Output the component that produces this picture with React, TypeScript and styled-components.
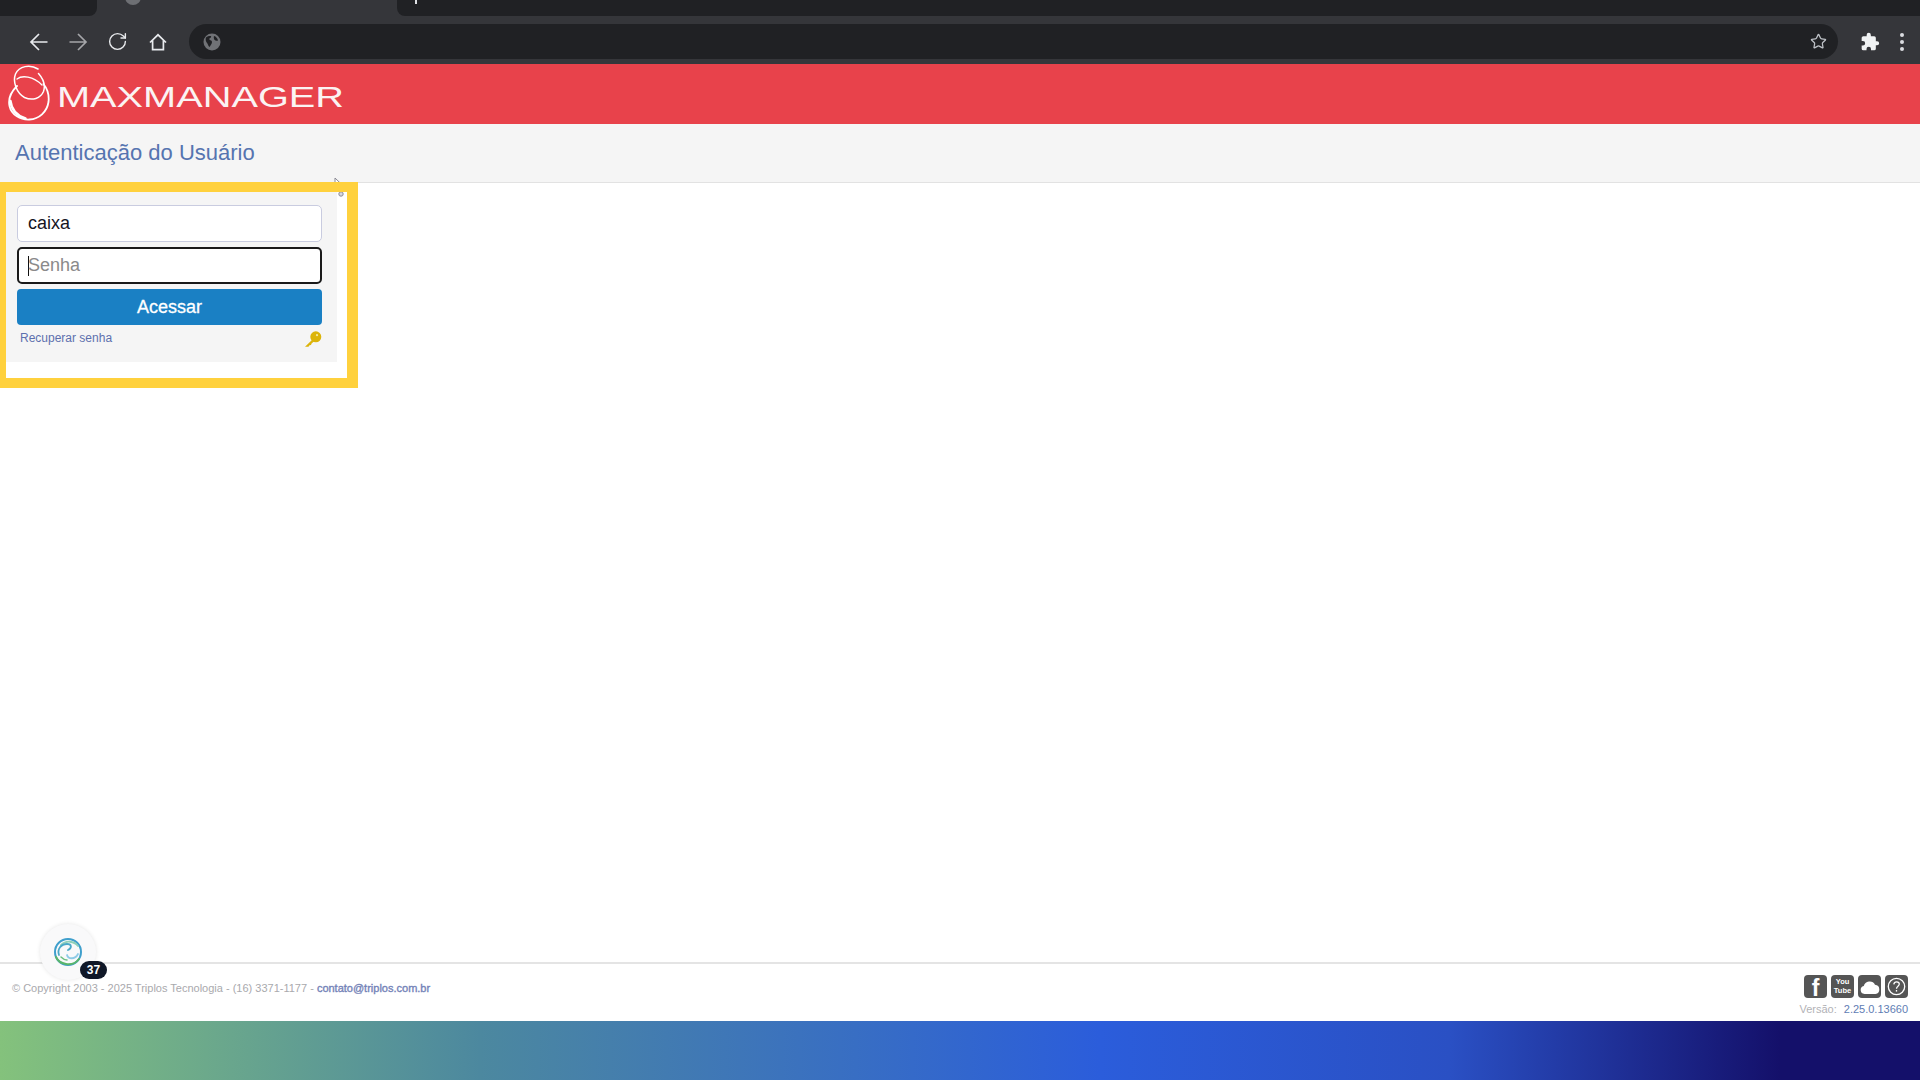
import React from "react";
import styled, { createGlobalStyle } from "styled-components";
import { RotateCw, Star } from "lucide-react";

const Global = createGlobalStyle`
  html, body { margin: 0; padding: 0; background: #fff; }
  body { font-family: "Liberation Sans", Arial, sans-serif; }
  * { box-sizing: border-box; }
`;

const Page = styled.div`
  position: relative;
  width: 1920px;
  height: 1080px;
  display: flex;
  flex-direction: column;
  overflow: hidden;
  background: #fff;
`;

const TabStrip = styled.div`
  height: 16px;
  display: flex;
  background: #35363a;
  flex: none;
`;

const DarkTab = styled.div<{ $side: "left" | "right" }>`
  height: 16px;
  background: #202124;
  width: ${(p) => (p.$side === "left" ? "97px" : "auto")};
  flex: ${(p) => (p.$side === "left" ? "none" : "1")};
  border-radius: ${(p) => (p.$side === "left" ? "0 0 8px 0" : "0 0 0 8px")};
  padding-left: 17px;
  overflow: hidden;
`;

const ActiveTab = styled.div`
  width: 300px;
  height: 16px;
  padding-left: 28px;
  overflow: hidden;
  flex: none;
`;

const TabFavicon = styled.div`
  width: 16px;
  height: 16px;
  margin-top: -11px;
  border-radius: 50%;
  background: #6d6f73;
`;

const Plus = styled.div`
  width: 2px;
  height: 4px;
  margin-left: 1px;
  background: #dfe1e5;
`;

const Toolbar = styled.div`
  height: 48px;
  padding: 7px 0 4px 29px;
  display: flex;
  align-items: center;
  background: #35363a;
  flex: none;
`;

const NavButton = styled.div<{ $dim?: boolean; $w?: number }>`
  width: ${(p) => p.$w ?? 39}px;
  display: flex;
  color: ${(p) => (p.$dim ? "#a5a6a9" : "#e8eaed")};
  flex: none;
`;

const Omnibox = styled.div`
  width: 1649px;
  height: 35px;
  margin-left: 10px;
  padding: 0 11px 0 14px;
  display: flex;
  align-items: center;
  justify-content: space-between;
  border-radius: 18px;
  background: #202124;
  color: #bdc1c6;
  flex: none;
`;

const ToolbarEnd = styled.div`
  display: flex;
  align-items: center;
  gap: 20px;
  margin-left: 22px;
  color: #f1f3f4;
`;

const Dots = styled.div`
  display: flex;
  flex-direction: column;
  gap: 3px;
`;

const Dot = styled.span`
  width: 4px;
  height: 4px;
  border-radius: 50%;
  background: #dadce0;
`;

const BrandBar = styled.header`
  height: 60px;
  padding: 0 0 3px 8px;
  display: flex;
  align-items: center;
  background: #e8424b;
  flex: none;
`;

const BrandName = styled.span`
  display: inline-block;
  margin: 8px 0 0 5px;
  font-family: "Liberation Sans", sans-serif;
  font-size: 29px;
  line-height: 30px;
  color: #fbf3f3;
  transform: scaleX(1.37);
  transform-origin: left center;
`;

const TitleBar = styled.div`
  height: 59px;
  padding: 0 0 0 15px;
  display: flex;
  align-items: center;
  background: #f5f5f5;
  border-bottom: 1px solid #e2e2e2;
  flex: none;
`;

const Title = styled.h1`
  margin: 0;
  font-size: 22px;
  font-weight: 400;
  color: #5674b0;
`;

const Main = styled.main`
  flex: 1;
  min-height: 0;
`;

const Highlight = styled.div`
  width: 358px;
  height: 206px;
  margin-top: -1px;
  border-style: solid;
  border-color: #ffd13d;
  border-width: 10px 11px 10px 6px;
  background: #fff;
`;

const LoginPanel = styled.form`
  width: 331px;
  height: 170px;
  padding: 13px 0 0 11px;
  display: flex;
  flex-direction: column;
  background: #f5f5f5;
`;

const Input = styled.div<{ $focus?: boolean }>`
  width: 305px;
  height: 37px;
  margin-bottom: 5px;
  padding-left: ${(p) => (p.$focus ? "9px" : "10px")};
  display: flex;
  align-items: center;
  font-size: 18px;
  color: #15151f;
  background: #fff;
  border-radius: 5px;
  border: ${(p) => (p.$focus ? "2px solid #1a1a1a" : "1px solid #c9cce0")};
`;

const Caret = styled.span`
  width: 1px;
  height: 20px;
  margin-right: -1px;
  background: #111;
`;

const Placeholder = styled.span`
  color: #8a8a8a;
`;

const Submit = styled.button`
  width: 305px;
  height: 36px;
  padding: 0;
  border: none;
  border-radius: 4px;
  font: 400 18px "Liberation Sans", sans-serif;
  -webkit-text-stroke: 0.3px #fff;
  color: #fff;
  background: #1a80c4;
`;

const LinkRow = styled.div`
  width: 305px;
  margin-top: 6px;
  padding-left: 3px;
  display: flex;
  align-items: center;
  justify-content: space-between;
`;

const RecoverLink = styled.a`
  margin-top: -3px;
  font-size: 12px;
  color: #5d70ae;
`;

const Footer = styled.footer`
  height: 59px;
  padding: 0 12px 0 12px;
  display: flex;
  align-items: flex-start;
  justify-content: space-between;
  background: #fff;
  border-top: 2px solid #e4e4e4;
  flex: none;
`;

const Copyright = styled.div`
  margin-top: 18px;
  font-size: 11px;
  color: #a9a9ad;
`;

const Contact = styled.a`
  color: #7483b8;
  -webkit-text-stroke: 0.35px #7483b8;
`;

const FooterRight = styled.div`
  display: flex;
  flex-direction: column;
  align-items: flex-end;
  gap: 5px;
  padding-top: 11px;
`;

const SocialRow = styled.div`
  display: flex;
  gap: 4px;
`;

const SocialIcon = styled.div`
  width: 23px;
  height: 23px;
  display: flex;
  align-items: center;
  justify-content: center;
  border-radius: 4px;
  background: #555;
  color: #fff;
`;

const FacebookGlyph = styled.span`
  margin-top: 3px;
  font: 700 23px/23px "Liberation Sans", sans-serif;
`;

const YouTubeGlyph = styled.span`
  font: 700 7.5px/8.5px "Liberation Sans", sans-serif;
  text-align: center;
`;

const Version = styled.div`
  font-size: 11px;
  color: #b2b2b6;
`;

const VersionNumber = styled.span`
  margin-left: 4px;
  color: #5f7db4;
`;

const GradientBand = styled.div`
  height: 59px;
  background: linear-gradient(90deg, #84c27c 0, #4c889f 480px, #2b5ddb 1100px, #2a50c4 1450px, #14106a 1780px, #14106a 1920px);
  flex: none;
`;

const ChatBubble = styled.div`
  position: absolute;
  left: 40px;
  top: 924px;
  width: 56px;
  height: 56px;
  display: flex;
  align-items: center;
  justify-content: center;
  border-radius: 50%;
  background: #f9f9fa;
  box-shadow: 0 0 4px rgba(0, 0, 0, 0.1);
`;

const ChatBadge = styled.div`
  position: absolute;
  left: 80px;
  top: 961px;
  width: 27px;
  height: 18px;
  border-radius: 9px;
  text-align: center;
  font: 700 12px/18px "Liberation Sans", sans-serif;
  color: #fff;
  background: #101828;
`;

const CursorPiece = styled.svg<{ $top: number }>`
  position: absolute;
  left: 334px;
  top: ${(p) => p.$top}px;
`;

const BackIcon = () => (
  <svg width="20" height="20" viewBox="0 0 20 20" fill="none" stroke="currentColor" strokeWidth="1.7">
    <path d="M18.500 10H2M10 2l-8 8 8 8" />
  </svg>
);

const ForwardIcon = () => (
  <svg width="20" height="20" viewBox="0 0 20 20" fill="none" stroke="currentColor" strokeWidth="1.7">
    <path d="M1.500 10H18M10 2l8 8-8 8" />
  </svg>
);

const HomeIcon = () => (
  <svg width="20" height="20" viewBox="0 0 20 20" fill="none" stroke="currentColor" strokeWidth="1.7">
    <path d="M2 10.500 10 2.800l8 7.700M4.600 8.500V17.600h10.800V8.500" />
  </svg>
);

const GlobeIcon = () => (
  <svg width="18" height="18" viewBox="0 0 18 18">
    <circle cx="9" cy="9" r="8.500" fill="#707276" />
    <path d="M3 4.500c2-1.500 3.500-1.800 5-1.500 .6 1-.4 2-1.600 2.400-.5 1 .6 1.600 1.800 2.100 1.200.7.9 2.500.1 3.800-.8 1.100-1.400 2.800-2 2.600C4.800 12.500 5 11 4 10 2.800 8.500 2.300 6.500 3 4.500Z M11 3c2 .4 3.700 2.500 4 4.500-1.400.5-2.800.2-3.600-.8C10.800 5.600 10.600 4 11 3Z" fill="#202124" />
  </svg>
);

const PuzzleIcon = () => (
  <svg width="20" height="20" viewBox="0 0 24 24" fill="currentColor">
    <path d="M20.500 11H19V7a2 2 0 0 0-2-2h-4V3.500a2.500 2.500 0 0 0-5 0V5H4a2 2 0 0 0-2 2v3.800h1.500a2.700 2.700 0 0 1 0 5.400H2V20a2 2 0 0 0 2 2h3.800v-1.500a2.700 2.700 0 0 1 5.400 0V22H17a2 2 0 0 0 2-2v-4h1.500a2.500 2.500 0 0 0 0-5Z" />
  </svg>
);

const LogoRings = () => (
  <svg width="44" height="56" viewBox="0 0 44 56" fill="none" stroke="#fff" strokeLinecap="round">
    <path d="M9 21C3 27 0 34 1.500 41c2 9 11 14 20 13.500C31 54 39 47 40.500 37c.8-7-1-13-5-18" strokeWidth="1.800" />
    <path d="M2.500 36c1 9 7 15 15 17.500" strokeWidth="2.400" />
    <path d="M30 4C22-1 11 1 7.500 9c-3 8 1 19 9 23.500 8 3.500 16 1 19-6 2-6-.5-13-5-18" strokeWidth="1.500" />
    <path d="M9 14c5-4 16-3 25 6" strokeWidth="1.300" />
  </svg>
);

const SwirlLogo = () => (
  <svg width="30" height="30" viewBox="0 0 30 30" fill="none" strokeLinecap="round">
    <circle cx="15" cy="15" r="13" stroke="#3f9fcc" strokeWidth="2" />
    <path d="M3 20C6 27 19 31 26 22" stroke="#5ab56a" strokeWidth="2" />
    <path d="M8 8c5-5 13-4 17 1" stroke="#8fd0b8" strokeWidth="1.800" />
    <path d="M6 18c-2-6 2-11 8-11 5 0 5 4 1 6" stroke="#4aa8c8" strokeWidth="1.800" />
    <path d="M14 18c1 4 8 5 11-1" stroke="#8fcbe6" strokeWidth="1.800" />
    <path d="M8 20c3 3 4 3 6 3" stroke="#6bbf7f" strokeWidth="1.500" />
  </svg>
);

const CloudIcon = () => (
  <svg width="20" height="14" viewBox="0 0 20 14" fill="#fff">
    <path d="M4.500 14A4 4 0 0 1 3.800 6.100 6 6 0 0 1 15 4.700 4.700 4.700 0 0 1 15.500 14Z" />
  </svg>
);

const HelpIcon = () => (
  <svg width="19" height="19" viewBox="0 0 19 19" fill="none" stroke="#fff" strokeWidth="1.300">
    <circle cx="9.500" cy="9.500" r="8.200" />
    <path d="M6.800 7.300c.2-1.700 1.300-2.500 2.800-2.500s2.700 1 2.700 2.300c0 2.200-2.800 2.100-2.800 4.600" />
    <path d="M9.500 13v1.600" />
  </svg>
);

const KeyIcon = () => (
  <svg width="18" height="17" viewBox="0 0 18 17">
    <circle cx="11.800" cy="5.800" r="5.500" fill="#dcb40a" />
    <path d="M8 9 1 15.800h3.500l1-1.500 1.500-.2.600-1.600 2.800-2.500Z" fill="#dcb40a" />
    <circle cx="13" cy="4.200" r="1.100" fill="#f5e8a0" />
  </svg>
);

const CursorTip = () => (
  <CursorPiece $top={177} width="10" height="5" viewBox="0 0 10 5" fill="#fff" stroke="#8a8a94" strokeWidth="1">
    <path d="M1 1v11l3-2.500 2 4 1.500-.8-2-4H9Z" />
  </CursorPiece>
);

const CursorTail = () => (
  <CursorPiece $top={192} width="10" height="5" viewBox="0 15 10 5" fill="#d8d8e0" stroke="#8a8a94" strokeWidth="1">
    <circle cx="7" cy="17" r="2.200" />
  </CursorPiece>
);

export default function App() {
  return (
    <Page>
      <Global />
      <TabStrip>
        <DarkTab $side="left" />
        <ActiveTab>
          <TabFavicon />
        </ActiveTab>
        <DarkTab $side="right">
          <Plus />
        </DarkTab>
      </TabStrip>
      <Toolbar>
        <NavButton><BackIcon /></NavButton>
        <NavButton $dim><ForwardIcon /></NavButton>
        <NavButton $w={41}><RotateCw size={21} strokeWidth={1.6} /></NavButton>
        <NavButton $w={31}><HomeIcon /></NavButton>
        <Omnibox>
          <GlobeIcon />
          <Star size={17} strokeWidth={1.8} />
        </Omnibox>
        <ToolbarEnd>
          <PuzzleIcon />
          <Dots><Dot /><Dot /><Dot /></Dots>
        </ToolbarEnd>
      </Toolbar>
      <BrandBar>
        <LogoRings />
        <BrandName>MAXMANAGER</BrandName>
      </BrandBar>
      <TitleBar>
        <Title>Autenticação do Usuário</Title>
      </TitleBar>
      <Main>
        <Highlight>
          <LoginPanel>
            <Input>caixa</Input>
            <Input $focus>
              <Caret />
              <Placeholder>Senha</Placeholder>
            </Input>
            <Submit type="button">Acessar</Submit>
            <LinkRow>
              <RecoverLink>Recuperar senha</RecoverLink>
              <KeyIcon />
            </LinkRow>
          </LoginPanel>
        </Highlight>
      </Main>
      <Footer>
        <Copyright>
          © Copyright 2003 - 2025 Triplos Tecnologia - (16) 3371-1177 - <Contact>contato@triplos.com.br</Contact>
        </Copyright>
        <FooterRight>
          <SocialRow>
            <SocialIcon><FacebookGlyph>f</FacebookGlyph></SocialIcon>
            <SocialIcon><YouTubeGlyph>You<br />Tube</YouTubeGlyph></SocialIcon>
            <SocialIcon><CloudIcon /></SocialIcon>
            <SocialIcon><HelpIcon /></SocialIcon>
          </SocialRow>
          <Version>
            Versão: <VersionNumber>2.25.0.13660</VersionNumber>
          </Version>
        </FooterRight>
      </Footer>
      <GradientBand />
      <ChatBubble><SwirlLogo /></ChatBubble>
      <ChatBadge>37</ChatBadge>
      <CursorTip />
      <CursorTail />
    </Page>
  );
}
